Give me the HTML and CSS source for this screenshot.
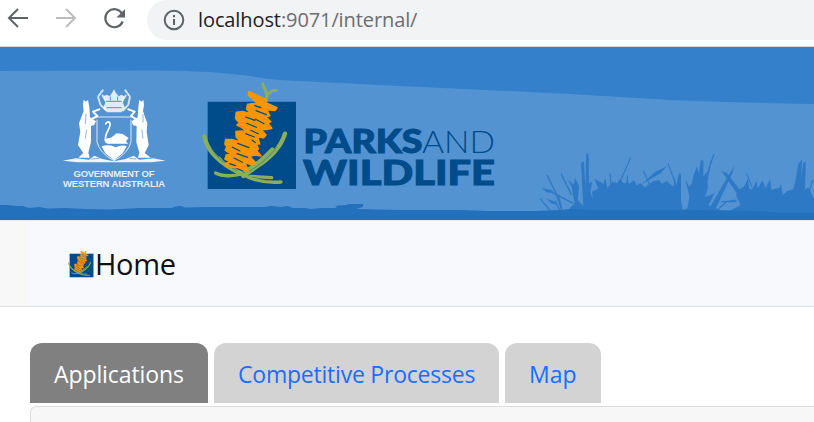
FILE: index.html
```html
<!DOCTYPE html>
<html lang="en">
<head>
<meta charset="utf-8">
<title>Home</title>
<link rel="stylesheet" href="styles.css">
</head>
<body>
<div class="toolbar">
  <svg class="nav-icons" viewBox="0 0 147 40" fill="none" stroke-width="2">
    <path stroke="#5f6368" d="M28 18H10M18 9l-9 9 9 9"/>
    <path stroke="#babcbe" d="M56 18h18M66 9l9 9-9 9"/>
    <path stroke="#5f6368" stroke-width="2.2" d="M122 13.5A9 9 0 1 0 122.700 21.500"/>
    <path fill="#5f6368" d="M125 9v8.500h-8.500z"/>
  </svg>
  <div class="omnibox">
    <svg class="info" viewBox="0 0 22 22" fill="none" stroke="#5f6368" stroke-width="2"><circle cx="11" cy="11" r="9.300"/><path d="M11 10v6M11 6v2.200"/></svg>
    <span class="url"><b>localhost</b>:9071/internal/</span>
  </div>
</div>
<header class="banner">
  <svg class="scene" viewBox="0 47 814 173">
    <defs>
      <g id="banksia">
        <path fill="#004b8a" d="M38 80H303V342H38z"/>
        <g fill="none" stroke="#8aaf5c" stroke-linecap="round" stroke-linejoin="round">
          <path stroke-width="9" d="M213 80L216 58L203 27M215 60L232 47L244 46"/>
          <path stroke-width="13" d="M28 184C36 222 65 255 108 280L145 300M270 176C257 219 220 253 183 276L145 303"/>
          <path stroke-width="10" d="M62 294C82 305 115 304 141 297C170 314 208 325 258 321M73 250C90 275 110 285 139 293M166 304L230 308M150 288C185 270 215 240 232 222"/>
          <path stroke="#356f7c" stroke-width="2" d="M50 222C70 252 95 272 125 286M245 216C220 250 195 268 165 288M172 306L215 316"/>
        </g>
        <path fill="#f99500" stroke="#f99500" stroke-width="5" stroke-linejoin="round" d="M162 50L180 58L214 74L212 83L246 98L240 106L215 104L224 122L213 127L227 140L218 143L230 160L212 163L198 164L213 180L206 188L188 186L194 207L184 207L190 222L184 226L198 243L180 240L164 244L181 263L170 270L150 262L158 284L148 286L128 277L96 275L90 266L106 260L90 252L94 240L110 238L91 226L96 215L90 208L92 194L110 194L138 202L124 186L123 170L140 168L158 172L140 157L126 150L134 144L122 130L124 112L142 110L168 116L155 102L158 88L176 86L190 88L174 73L160 60z"/>
        <path fill="none" stroke="#004b8a" stroke-width="3.500" stroke-linecap="round" d="M179 92L198 98M183 107L214 119M152 126L180 136M181 132L207 146M155 145L184 157M152 176L178 186M167 166L190 176M128 205L162 218M112 217L135 228M126 236L158 247M117 249L142 262M104 266L122 272M171 195L181 203"/>
      </g>
    </defs>
    <path fill="#3480cb" d="M0 47H814V220H0z"/>
    <path fill="#5393d2" d="M0 71L155 70.500Q200 71 222 73L250 76Q265 79 280 80L400 86L570 94L670 100Q740 103 814 104V220H0z"/>
    <g fill="#2e79c5" transform="translate(530 140) scale(.33333)">
      <path d="M120 212L118 205L134 190L125 140L113 118L132 134L135 113L147 138L143 180L160 198L153 68L162 65L166 145L169 40L176 42L177 130L187 125L181 155L188 180L186 155L205 146L193 116L220 131L226 115L232 145L248 125L262 130L270 116L280 130L289 128L292 98L296 132L312 121L320 136L331 130L345 142L369 124L387 120L396 131L410 123L431 141L434 110L438 138L447 100L453 102V180L458 210L472 205L478 170L466 117L477 140L486 130L490 107L501 79L507 101L513 60L520 62V110L530 95L534 142L525 171L554 160L535 195L575 212H600L632 195L618 165L626 148L642 140L654 115L657 145L665 150L680 123L683 146L697 121L707 145L720 117L724 149L749 143L753 132L758 165L773 152L790 148L797 121L805 72L816 58L813 116L820 66L827 67L825 150L835 142L852 177V230H120z"/>
      <path d="M332 135L375 96L410 79L393 99L350 124zM575 94L590 98L640 163L626 168zM535 210L596 106L613 77L607 99L555 210zM35 143L66 151L70 159L50 157zM48 175L72 184L82 196L62 189z"/>
      <path fill="none" stroke="#2e79c5" stroke-width="4" d="M30 175L60 212M51 105L78 160L96 212M60 154L130 190M75 182L90 212M93 101L125 165"/>
      <path fill="none" stroke="#2e79c5" stroke-width="3.500" d="M302 53L263 140M340 93L360 135M414 70L436 130M552 42L527 115M543 62L532 120M650 100L665 140M848 120L835 165M560 212L590 185L620 180M575 185H620M85 165L95 205M240 100L243 140"/>
    </g>
    <path fill="#2370bd" d="M0 205L7 205L15 206L23 206L29 208L39 207L48 208.500L65 208L85 209L110 209.500L140 208L172 208L175 206.500L181 206L185 207.500L207 207L230 207L266 207L270 206L281 207L288 206L293 208L306 208L310 209L321 208L337 208L335 206.500L338 205.500L347 205L348 204L363 204L363 207L356 209L400 210L460 210L487 211L535 211L560 210L571 209L590 210L700 210L760 211L780 213L814 213V220H0z"/>
    <g fill="none" stroke="#fff" stroke-linecap="round" stroke-linejoin="round" transform="translate(50 75) scale(.33333)">
      <path stroke-width="6" stroke-opacity=".75" stroke-dasharray="9 4" d="M158 46L144 65L151 89L166 104M226 46L240 65L235 89L220 106M158 62L166 76M227 62L218 76"/>
      <path fill="#fff" fill-opacity=".82" stroke="none" d="M161 63L171 59L179 64L186 54L192 43L198 54L206 64L214 59L223 64L219 84L225 98L214 112H171L159 99L166 83z"/>
      <path stroke="#5393d2" stroke-width="3" d="M169 79H214M171 98H214M181 66V76M203 66V76"/>
      <path stroke-width="3" stroke-opacity=".8" d="M138 126H243M141 135V200Q148 234 192 257Q236 234 243 200V135"/>
      <path fill="#fff" stroke="none" d="M101 74L107 80L114 75L118 96L120 127L138 139L132 151L123 152L123 201L115 233L119 248H85L100 234L84 210L91 170L87 145L93 129L101 108L99 89zM280 74L275 80L268 75L265 96L263 127L245 139L249 151L260 153L259 202L268 233L264 248H302L284 234L296 210L290 170L292 145L286 129L279 108L282 89z"/>
      <path stroke-width="6" d="M118 136L142 123L129 110L148 103M264 136L243 123L254 110L235 103"/>
      <path stroke-width="5" d="M167 147Q173 137 179 143C187 154 162 176 167 194"/>
      <path fill="#fff" stroke="none" d="M163 192L183 188L200 175L218 177L236 189L228 199L234 206H172Q163 202 163 192z M155 214Q178 207 197 217Q217 208 230 214L218 235L192 256L166 235z"/>
      <path fill="#fff" fill-opacity=".9" stroke="none" d="M38 257L78 250L117 254L133 242L157 252L192 259L227 252L251 242L268 254L310 250L347 257L303 262H83z"/>
      <path stroke="#5393d2" stroke-width="2" d="M108 118L106 146M279 119L279 142M110 165L106 190M276 165L279 190M125 252L148 250M239 250L258 252"/>
    </g>
    <g class="crest-text"><text x="73.500" y="176.500" textLength="81">GOVERNMENT OF</text><text x="63" y="186.800" textLength="102">WESTERN AUSTRALIA</text></g>
    <use href="#banksia" transform="translate(195 75) scale(.33333)"/>
    <g fill="#004b8a" class="wordmark">
      <text class="heavy" x="303.500" y="153.300" textLength="119" lengthAdjust="spacingAndGlyphs">PARKS</text>
      <text class="light" x="422" y="153.300" textLength="73" lengthAdjust="spacingAndGlyphs">AND</text>
      <text class="heavy wild" x="303" y="185.300" textLength="192" lengthAdjust="spacingAndGlyphs">WILDLIFE</text>
    </g>
  </svg>
</header>
<nav class="breadcrumb">
  <div class="crumb">
    <svg class="mini" viewBox="20 50 300 300"><use href="#banksia"/></svg>
    <span>Home</span>
  </div>
</nav>
<main>
  <div class="tabs">
    <a class="tab active">Applications</a>
    <a class="tab wide">Competitive Processes</a>
    <a class="tab map">Map</a>
  </div>
  <section class="panel"></section>
</main>
</body>
</html>
```
FILE: styles.css
```css
*{box-sizing:border-box}
body{margin:0;width:814px;height:422px;overflow:hidden;background:#fff;font-family:"Open Sans","Noto Sans",sans-serif;color:#111}
svg{display:block}
.toolbar{height:47px;display:flex;border-bottom:1px solid #d5d7da}
.nav-icons{width:147px;height:40px;flex:none}
.omnibox{flex:1;height:40px;background:#f1f3f4;border-radius:20px 0 0 20px;display:flex;align-items:center;padding-left:16px}
.info{width:22px;height:22px;margin-right:13px}
.url{font-size:20px;color:#6b6e72;white-space:nowrap;letter-spacing:-.1px;margin-top:-2px}
.url b{font-weight:400;color:#202124}
.banner{height:173px}
.scene{width:814px;height:173px}
.crest-text{font:bold 9.500px "Liberation Sans",sans-serif;fill:#e4eef8}
.wordmark{font-family:Lato,sans-serif}
.heavy{font-size:31.500px;font-weight:900;stroke:#004b8a;stroke-width:1px}
.wild{font-size:33.500px}
.light{font-size:32px;font-weight:300}
.breadcrumb{height:87px;padding-left:30px;background:#f8f8f8;border-top:1px solid #e7e9ec;border-bottom:1px solid #dee2e6}
.crumb{height:85px;background:#f8f9fc;padding:2px 0 0 38px;display:flex;align-items:center;font-size:29px}
.crumb span{margin-top:-2px;letter-spacing:-.3px}
.mini{width:27px;height:27px}
main{padding:36px 0 0 30px}
.tabs{display:flex;gap:6px}
.tab{height:60px;border-radius:12px 12px 0 0;background:#d3d3d3;color:#1a6dff;font-size:23px;display:flex;align-items:center;padding:2px 0 0 24px;white-space:nowrap}
.active{width:178px;background:#808080;color:#fff;letter-spacing:-.1px}
.wide{width:285px;letter-spacing:-.22px}
.map{width:96px}
.panel{margin-top:3px;height:16px;border:1px solid #dcdedd;border-width:1px 0 0 1px;border-radius:6px 0 0 0;background:#f7f7f7}
```
